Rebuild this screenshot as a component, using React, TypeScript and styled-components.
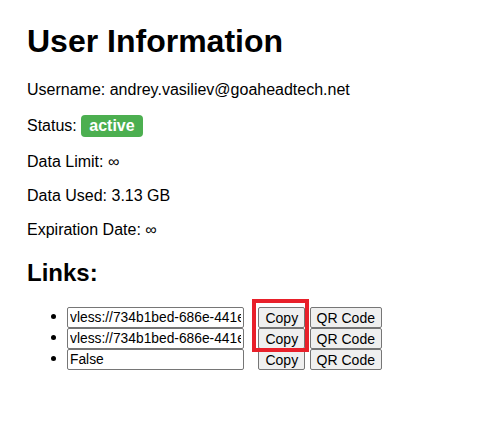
import styled, { createGlobalStyle } from 'styled-components';

const GlobalStyle = createGlobalStyle`
  body {
    margin: 8px;
    font-family: 'Liberation Sans', Arial, sans-serif;
    color: #000;
    background: #fff;
  }
`;

const Wrapper = styled.div`
  padding: 0 19px;
`;

const Title = styled.h1`
  font-size: 32px;
  font-weight: 700;
  margin: 15px 0 21.44px;
`;

const Field = styled.p`
  font-size: 16px;
  margin: 16px 0;
`;

const Badge = styled.span<{ $color: string }>`
  display: inline-block;
  padding: 2px 8px;
  border-radius: 4px;
  background: ${(p) => p.$color};
  color: #fff;
  font-weight: 700;
`;

const SubTitle = styled.h2`
  font-size: 24px;
  font-weight: 700;
  margin: 19.92px 0;
`;

const LinkList = styled.ul`
  position: relative;
  margin: 16px 0;
  padding-left: 40px;
  font-size: 16px;
`;

const LinkItem = styled.li`
  height: 21px;
`;

const LinkInput = styled.input`
  box-sizing: border-box;
  width: 177px;
  height: 21px;
  padding: 1px 2px;
  margin: 0 10px 0 0;
  border: 1px solid #767676;
  border-radius: 2px;
  font-family: 'Liberation Sans', Arial, sans-serif;
  font-size: 13.8px;
  color: #000;
  vertical-align: top;
`;

const Button = styled.button`
  box-sizing: border-box;
  height: 21px;
  padding: 1px 6px;
  margin: 0;
  border: 1px solid #767676;
  border-radius: 2px;
  background: #efefef;
  font-family: 'Liberation Sans', Arial, sans-serif;
  font-size: 14px;
  color: #000;
  vertical-align: top;
  cursor: pointer;
`;

const Highlight = styled.div`
  position: absolute;
  left: 225px;
  top: -8px;
  width: 57px;
  height: 53px;
  box-sizing: border-box;
  border: 4px solid #e8202a;
  pointer-events: none;
`;

const links = [
  'vless://734b1bed-686e-441e-9c3c-5a1e7b2f0d11@goaheadtech.net:443',
  'vless://734b1bed-686e-441e-9c3c-5a1e7b2f0d11@goaheadtech.net:8443',
  'False',
];

const App = () => {
  return (
    <>
      <GlobalStyle />
      <Wrapper>
        <Title>User Information</Title>
        <Field>Username: andrey.vasiliev@goaheadtech.net</Field>
        <Field>
          Status: <Badge $color='#4caf50'>active</Badge>
        </Field>
        <Field>Data Limit: ∞</Field>
        <Field>Data Used: 3.13 GB</Field>
        <Field>Expiration Date: ∞</Field>
        <SubTitle>Links:</SubTitle>
        <LinkList>
          {links.map((link, i) => (
            <LinkItem key={i}>
              <LinkInput type='text' value={link} readOnly />{' '}
              <Button>Copy</Button> <Button>QR Code</Button>
            </LinkItem>
          ))}
          <Highlight />
        </LinkList>
      </Wrapper>
    </>
  );
};

export default App;
